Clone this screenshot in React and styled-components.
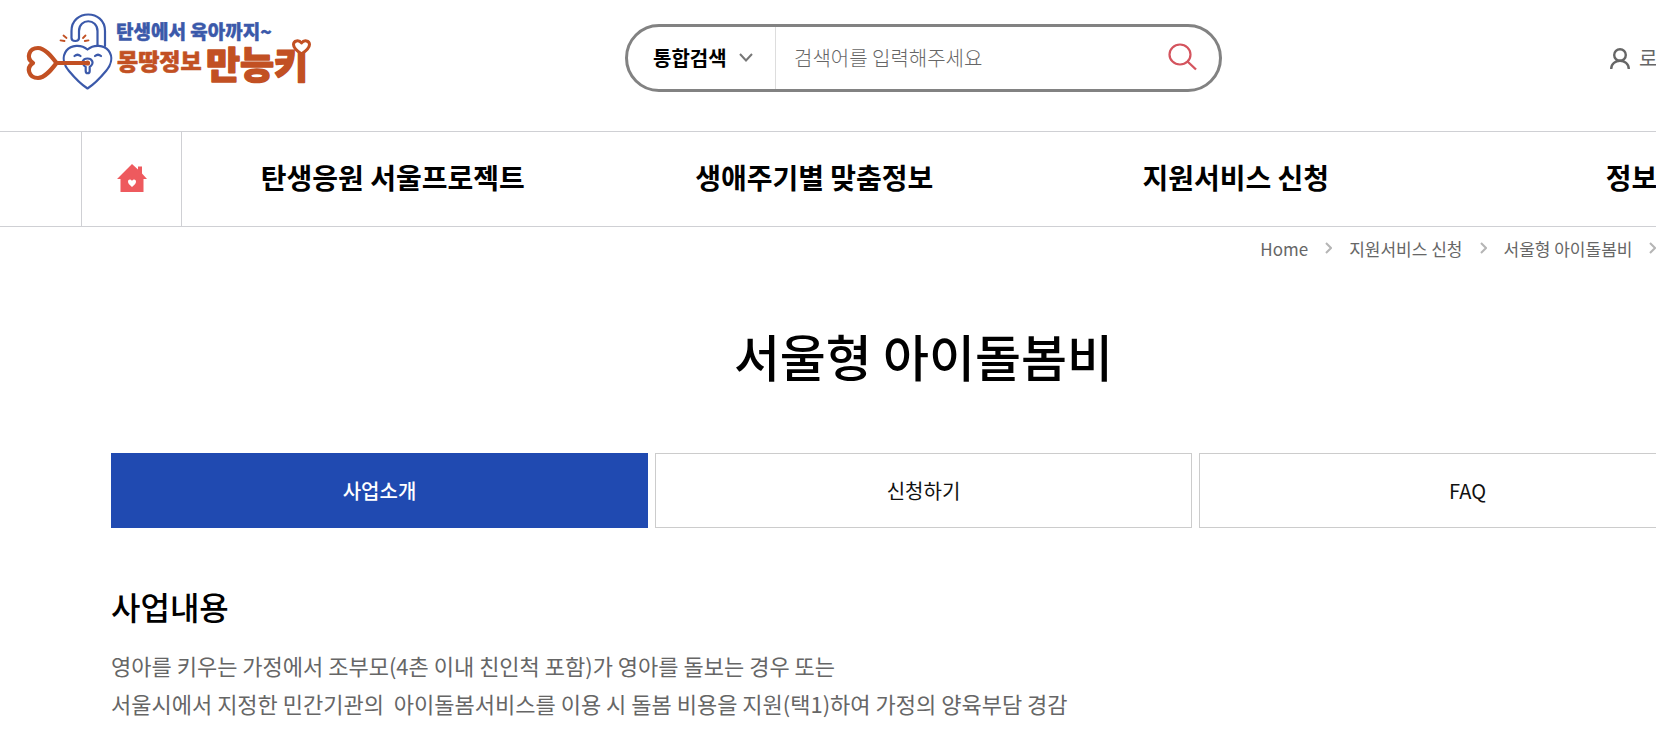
import styled, { createGlobalStyle } from "styled-components";

const blue = "#204ab1";
const logoBlue = "#3b59aa";
const logoOrange = "#c25023";
const lineColor = "#cfd0d4";

const GlobalStyle = createGlobalStyle`
  * {
    box-sizing: border-box;
  }

  body {
    margin: 0;
    overflow-x: hidden;
    background-color: #fff;
    color: #000;
    font-family: "Noto Sans CJK KR", "Noto Sans", sans-serif;
  }

  a {
    color: inherit;
    text-decoration: none;
  }
`;

const Page = styled.div`
  width: calc(100% + 191px);
`;

const TopBar = styled.header`
  display: grid;
  grid-template-columns: 1fr 597px 1fr;
  align-items: start;
  height: 131px;
`;

const LogoLink = styled.a`
  padding: 5px 0 0 20px;

  svg {
    display: block;
  }
`;

const SearchForm = styled.form`
  display: flex;
  align-items: stretch;
  height: 68px;
  margin-top: 24px;
  border: 3px solid #828282;
  border-radius: 34px;
  overflow: hidden;
`;

const SelectWrap = styled.div`
  display: flex;
  align-items: center;
  width: 148px;
  padding: 0 22px 2px 25px;
  border-right: 1px solid #ddd;

  svg {
    flex: none;
    pointer-events: none;
  }
`;

const SearchSelect = styled.select`
  flex: 1;
  min-width: 0;
  padding: 0;
  border: 0;
  appearance: none;
  background: none;
  color: #000;
  font-family: inherit;
  font-size: 20px;
  font-weight: 700;
`;

const SearchInput = styled.input`
  flex: 1;
  min-width: 0;
  padding: 0 0 2px 18px;
  border: 0;
  outline: 0;
  font-family: inherit;
  font-size: 20px;
  font-weight: 300;

  &::placeholder {
    color: #666;
    opacity: 1;
  }
`;

const SearchButton = styled.button`
  display: flex;
  align-items: center;
  padding: 0 22px 2px;
  border: 0;
  background: none;
`;

const UserMenu = styled.div`
  display: flex;
  padding: 43px 0 0 388px;
`;

const LoginLink = styled.a`
  display: flex;
  align-items: center;
  gap: 9px;
  color: #666;
  font-size: 20px;
  line-height: 30px;
  white-space: nowrap;
`;

const MainNav = styled.nav`
  display: flex;
  height: 96px;
  padding-left: 81px;
  border-top: 1px solid ${lineColor};
  border-bottom: 1px solid ${lineColor};
`;

const HomeLink = styled.a`
  display: flex;
  flex: none;
  align-items: center;
  justify-content: center;
  width: 101px;
  padding-bottom: 2px;
  border-left: 1px solid ${lineColor};
  border-right: 1px solid ${lineColor};
`;

const MenuList = styled.ul`
  display: grid;
  flex: 0 0 calc(100% - 80px);
  grid-template-columns: repeat(4, 1fr);
  margin: 0;
  padding: 0;
  list-style: none;
`;

const MenuLink = styled.a`
  display: flex;
  align-items: center;
  justify-content: center;
  height: 100%;
  padding-bottom: 4px;
  font-size: 28px;
  font-weight: 700;
  white-space: nowrap;
`;

const Content = styled.main`
  padding: 0 111px;
`;

const Breadcrumb = styled.nav`
  display: flex;
  align-items: center;
  justify-content: flex-end;
  gap: 17px;
  height: 42px;
  color: #666;
  font-size: 17px;
  white-space: nowrap;

  svg {
    flex: none;
  }
`;

const Title = styled.h1`
  margin: 48px 0 60px;
  font-size: 50px;
  font-weight: 500;
  line-height: 76px;
  text-align: center;
`;

const TabList = styled.div`
  display: grid;
  grid-template-columns: repeat(3, 1fr);
  gap: 7px;
`;

const Tab = styled.button`
  height: 75px;
  padding: 0;
  border: 1px solid ${(props) => (props.$active ? blue : "#ccc")};
  background-color: ${(props) => (props.$active ? blue : "#fff")};
  color: ${(props) => (props.$active ? "#fff" : "#111")};
  font-family: inherit;
  font-size: 20px;
  font-weight: ${(props) => (props.$active ? 500 : 400)};
`;

const SectionTitle = styled.h2`
  margin: 54px 0 16px;
  font-size: 32px;
  font-weight: 500;
  line-height: 48px;
`;

const Description = styled.p`
  margin: 0;
  color: #666;
  font-size: 22px;
  line-height: 38px;
  white-space: pre-wrap;
`;

const Logo = () => (
  <svg
    width="300"
    height="90"
    viewBox="20 5 300 90"
    fill="none"
    strokeLinecap="round"
    strokeLinejoin="round"
    role="img"
    aria-label="몽땅정보 만능키"
  >
    <g stroke={logoBlue} strokeWidth="2.200">
      <path d="M97.5 46V31C97.5 18 79 18 79 31V38C79 42 71.500 42 71.500 38V31C71.500 9 105 9 105 31V46" />
      <path
        fill="#fff"
        d="M87.500 49.500C81 44 71 45 66.500 50.500C61.500 57 64 65 69 71C74 77 82 85 87.500 88.500C93 85 101 77 106 71C111 65 113.500 57 108.500 50.500C104 45 94 44 87.500 49.500Z"
      />
      <path d="M74.500 56Q77.500 53.500 80.500 56M95 56Q98 53.500 101 56" />
      <path d="M85.700 67C80 63 83 58.500 87.500 58.500C92 58.500 95 63 89.700 67V71C89.700 74 85.700 74 85.700 71Z" />
    </g>
    <g stroke={logoOrange}>
      <path
        strokeWidth="4.200"
        d="M56.500 63C51.500 56.500 45 48 38 48C29 48 25.500 58 33 63C25.500 68 29 78 38 78C45 78 51.500 69.500 56.500 63H87"
      />
      <path
        strokeWidth="1.800"
        d="M60.500 40.300L64.500 41M63.500 35.500L66.500 38M83 38L85.500 35.500M84.800 41L88.500 40.300"
      />
    </g>
    <circle cx="87.500" cy="63" r="2.600" fill={logoOrange} />
    <g fontFamily="'Noto Sans CJK KR', sans-serif" fontWeight="900">
      <text x="116" y="39" fontSize="19" fill={logoBlue} stroke={logoBlue} strokeWidth="0.400">
        탄생에서 육아까지~
      </text>
      <text x="117" y="70" fontSize="23" fill={logoOrange} stroke={logoOrange} strokeWidth="0.600">
        몽땅정보
      </text>
      <text x="206" y="79" fontSize="37" fill={logoOrange} stroke={logoOrange} strokeWidth="1.400">
        만능키
      </text>
    </g>
    <path
      d="M301.500 54C297 51 293.500 48 293.500 44.500C293.500 40.500 299 39.500 301.500 43C304 39.500 309.500 40.500 309.500 44.500C309.500 48 306 51 301.500 54Z"
      fill="#fff"
      stroke={logoOrange}
      strokeWidth="3"
    />
  </svg>
);

const ArrowDown = () => (
  <svg width="14" height="9" viewBox="0 0 14 9" fill="none">
    <path d="M1 1L7 7.500L13 1" stroke="#777" strokeWidth="2" />
  </svg>
);

const ArrowRight = () => (
  <svg width="7" height="12" viewBox="0 0 7 12" fill="none">
    <path d="M1 1L6 6L1 11" stroke="#b5b5b5" strokeWidth="2" />
  </svg>
);

const SearchIcon = () => (
  <svg width="29" height="28" viewBox="0 0 29 28" fill="none">
    <ellipse cx="12" cy="11.500" rx="10.500" ry="10" stroke="#d4545e" strokeWidth="2.200" />
    <path d="M19.500 18.500L28 26.500" stroke="#d4545e" strokeWidth="2.400" />
  </svg>
);

const UserIcon = () => (
  <svg width="20" height="21" viewBox="0 0 20 21" fill="none">
    <circle cx="10" cy="7" r="5.800" stroke="#666" strokeWidth="2.400" />
    <path d="M1.200 21C1.200 10 18.800 10 18.800 21" stroke="#666" strokeWidth="2.400" />
  </svg>
);

const HomeIcon = () => (
  <svg width="30" height="28" viewBox="0 0 30 28">
    <path
      fill="#ee5a5e"
      d="M15 0L21 5.500V2.500H25V9.500L30 15H26.500V28H3.500V15H0Z"
    />
    <path
      fill="#fff"
      d="M15 23C12 20.500 11 19 11 17.500C11 15 14 14.800 15 17C16 14.800 19 15 19 17.500C19 19 18 20.500 15 23Z"
    />
  </svg>
);

const menus = [
  "탄생응원 서울프로젝트",
  "생애주기별 맞춤정보",
  "지원서비스 신청",
  "정보마당",
];

const tabs = ["사업소개", "신청하기", "FAQ"];

const App = () => {
  return (
    <>
      <GlobalStyle />
      <Page>
        <TopBar>
          <LogoLink href="#">
            <Logo />
          </LogoLink>
          <SearchForm role="search">
            <SelectWrap>
              <SearchSelect aria-label="검색 구분">
                <option>통합검색</option>
              </SearchSelect>
              <ArrowDown />
            </SelectWrap>
            <SearchInput
              type="text"
              aria-label="검색어"
              placeholder="검색어를 입력해주세요"
            />
            <SearchButton type="button" aria-label="검색">
              <SearchIcon />
            </SearchButton>
          </SearchForm>
          <UserMenu>
            <LoginLink href="#">
              <UserIcon />
              로그인
            </LoginLink>
          </UserMenu>
        </TopBar>
        <MainNav>
          <HomeLink href="#" aria-label="홈">
            <HomeIcon />
          </HomeLink>
          <MenuList>
            {menus.map((menu) => (
              <li key={menu}>
                <MenuLink href="#">{menu}</MenuLink>
              </li>
            ))}
          </MenuList>
        </MainNav>
        <Content>
          <Breadcrumb aria-label="현재 위치">
            <a href="#">Home</a>
            <ArrowRight />
            <a href="#">지원서비스 신청</a>
            <ArrowRight />
            <a href="#">서울형 아이돌봄비</a>
            <ArrowRight />
            <a href="#">사업소개</a>
          </Breadcrumb>
          <Title>서울형 아이돌봄비</Title>
          <TabList role="tablist">
            {tabs.map((tab, index) => (
              <Tab
                key={tab}
                type="button"
                role="tab"
                aria-selected={index === 0}
                $active={index === 0}
              >
                {tab}
              </Tab>
            ))}
          </TabList>
          <SectionTitle>사업내용</SectionTitle>
          <Description>
            영아를 키우는 가정에서 조부모(4촌 이내 친인척 포함)가 영아를 돌보는 경우 또는
            <br />
            {"서울시에서 지정한 민간기관의  아이돌봄서비스를 이용 시 돌봄 비용을 지원(택1)하여 가정의 양육부담 경감"}
          </Description>
        </Content>
      </Page>
    </>
  );
};

export default App;
